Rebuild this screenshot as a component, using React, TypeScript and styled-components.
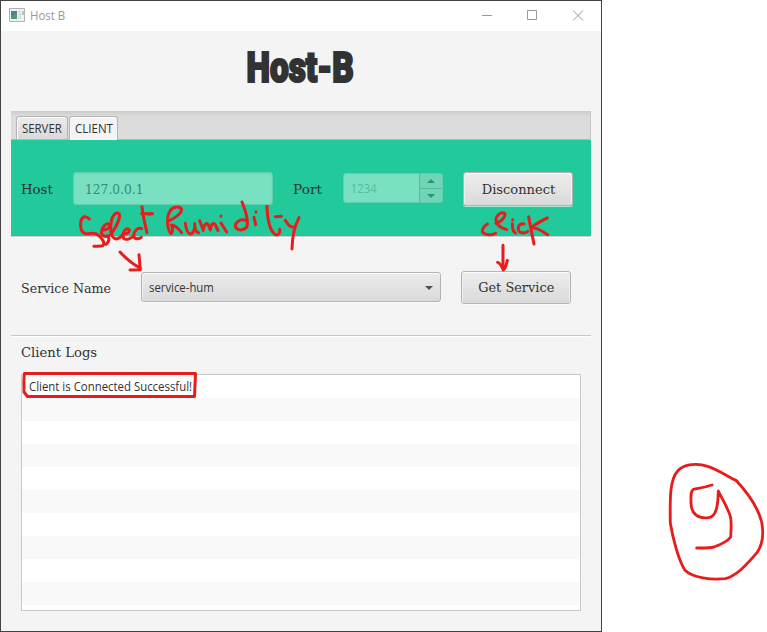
import React from "react";
import styled, { createGlobalStyle } from "styled-components";

const Global = createGlobalStyle`
  * { box-sizing: border-box; }
  body { margin: 0; background: #fff; overflow: hidden; }
`;

const Page = styled.main`
  position: relative;
  width: 767px;
  height: 632px;
  background: #fff;
  color: #323232;
  font: 12px/16px "Open Sans", "Noto Sans", sans-serif;
`;

const Window = styled.section`
  width: 602px;
  height: 632px;
  border: 1px solid #434343;
  background: #f4f4f4;
  display: flex;
  flex-direction: column;
`;

const TitleBar = styled.header`
  flex: 0 0 30px;
  display: flex;
  align-items: center;
  background: #fff;
  color: #999;
  padding: 0 17px 0 8px;

  & > svg:first-child { margin: 0 5px 2px 0; }
`;

const Controls = styled.div`
  display: flex;
  gap: 34px;
  margin-left: auto;
  padding-bottom: 1px;
  svg { display: block; }
`;

/* Inline text whose glyph width can be tuned. */
const Text = styled.span<{ $scale?: number; $spacing?: number; $from?: string }>`
  display: inline-block;
  white-space: nowrap;
  letter-spacing: ${(p) => p.$spacing ?? 0}px;
  transform: scaleX(${(p) => p.$scale ?? 1});
  transform-origin: ${(p) => p.$from ?? "left"} center;
`;

const Heading = styled.h1`
  flex: 0 0 80px;
  margin: 0;
  padding: 0 2px 9px 0;
  display: flex;
  align-items: center;
  justify-content: center;
  font: 900 43px/60px Roboto, "Open Sans", sans-serif;
  -webkit-text-stroke: 2.2px #323232;
`;

const Body = styled.div`
  flex: 1;
  margin: 0 10px;
  display: flex;
  flex-direction: column;
`;

const Tabs = styled.nav`
  height: 29px;
  padding: 5px 5px 0;
  display: flex;
  gap: 1px;
  border: solid #c8c8c8;
  border-width: 0 1px 0 0;
  background: linear-gradient(#cbcbcb 0, #dcdcdc 5px, #dcdcdc 28px, #b6b6b6 28px);
`;

const Tab = styled.div<{ $active?: boolean; $width: number }>`
  width: ${(p) => p.$width}px;
  height: ${(p) => (p.$active ? 24 : 23)}px;
  padding: 4px 0 0 5px;
  border: 1px solid #b5b5b5;
  border-bottom: 0;
  border-radius: 3px 3px 0 0;
  background: ${(p) => (p.$active ? "#f4f4f4" : "linear-gradient(#ececec, #d9d9d9)")};
  box-shadow: inset 1px 1px #fafafa;
`;

const serif = `"DejaVu Serif", "Liberation Serif", serif`;

const Connection = styled.div`
  height: 98px;
  padding: 32px 18px 0 10px;
  display: flex;
  background: #22c99a;
  border-bottom: 1px solid #fff;
  box-shadow: inset 0 -1px #c8cfcc;
`;

const Label = styled.label<{ $width?: number }>`
  width: ${(p) => (p.$width ? p.$width + "px" : "auto")};
  font: 13.3px/20px ${serif};
  padding-top: 8px;
`;

const HostField = styled.div`
  width: 200px;
  height: 33px;
  margin-right: 20px;
  padding: 7px 11px;
  border: 1px solid #5fcfad;
  border-radius: 3px;
  background: #7ae0c2;
  box-shadow: inset 0 1px 2px #6dd5b6;
  color: #2b9273;
  font: 12.5px/19px ${serif};
`;

const Spinner = styled.div`
  width: 100px;
  height: 30px;
  margin: 1px 20px 0 0;
  display: grid;
  grid-template-columns: 1fr 23px;
  border: 1px solid #5fcfad;
  border-radius: 3px;
  background: #7ae0c2;
  color: #55bc9c;
  overflow: hidden;
  & > span { padding: 7px 0 0 7px; }
`;

const Steps = styled.div`
  display: grid;
  grid-template-rows: 1fr 1fr;
  border-left: 1px solid #52bd9b;
`;

const Step = styled.div`
  display: flex;
  align-items: center;
  justify-content: center;
  background: #70d5b7;
  & + & { border-top: 1px solid #52bd9b; }
`;

const Button = styled.button<{ $height: number }>`
  width: 110px;
  height: ${(p) => p.$height}px;
  padding: 1px 0 0;
  border: 1px solid #b4b4b4;
  border-radius: 3px;
  background: linear-gradient(#ededed, #dadada);
  box-shadow: inset 0 1px #fafafa, inset 1px 0 #efefef, inset -1px 0 #efefef, 0 1px rgba(255, 255, 255, 0.6);
  color: #323232;
  font: 13.3px/20px ${serif};
`;

const ServiceRow = styled.div`
  height: 98px;
  padding: 33px 20px 0 10px;
  display: flex;
  border-bottom: 1px solid #c8c8c8;
`;

const Select = styled.div`
  width: 300px;
  height: 30px;
  margin: 1px 20px 0 0;
  padding: 1px 7px 0;
  display: flex;
  align-items: center;
  justify-content: space-between;
  border: 1px solid #b4b4b4;
  border-radius: 3px;
  background: linear-gradient(#ececec, #dadada);
  box-shadow: inset 0 1px #fafafa, inset 1px 0 #efefef, 0 1px rgba(255, 255, 255, 0.6);
`;

const LogsTitle = styled.div`
  height: 38px;
  padding: 6px 10px;
  border-top: 1px solid #fff;
  font: 13.3px/20px ${serif};
`;

const Logs = styled.div`
  height: 237px;
  margin: 0 10px;
  border: 1px solid #c8c8c8;
  background: #fff;
  overflow: hidden;
`;

const LogRow = styled.div`
  height: 23px;
  padding: 4px 7px;
  background: #fff;
  &:nth-child(even) { background: #f9f9f9; }
`;

const Ink = styled.svg`
  position: absolute;
  inset: 0;
  pointer-events: none;
  fill: none;
  stroke: #e81c1c;
  stroke-linecap: round;
  stroke-linejoin: round;
`;

const Arrow = ({ up = false, color }: { up?: boolean; color: string }) => (
  <svg width="8" height="4" viewBox="0 0 8 4">
    <path d={up ? "M0 4L4 0L8 4Z" : "M0 0H8L4 4Z"} fill={color} />
  </svg>
);

const Annotations = () => (
  <Ink width="767" height="632" viewBox="0 0 767 632">
    {/* "Select" and its arrow */}
    <g transform="translate(0 150) scale(.33333)" strokeWidth="9">
      <path d="M268 207C257 196 248 198 243 212C239 231 243 248 258 251C272 253 282 244 295 256C308 266 317 281 308 287C300 290 291 288 282 289" />
      <path d="M307 241C322 239 334 231 328 223C318 216 305 234 304 247C306 262 326 265 338 246C350 227 363 200 357 191C348 184 337 196 334 214C329 238 332 260 345 266C354 270 366 258 370 250M318 283C330 273 329 258 319 259" />
      <path d="M370 252C382 253 392 245 386 237C375 232 365 254 371 265C379 272 394 265 401 257M425 236C413 231 401 243 401 257C403 269 417 268 424 262M426 170C428 195 435 222 441 248M425 191L457 191" />
      <path d="M360 306C374 321 398 343 421 354M417 314L421 359L390 360" />
    </g>
    {/* "humidity" */}
    <g transform="translate(150 150) scale(.33333)" strokeWidth="9">
      <path d="M-5 192L7 191M54 214C69 207 93 194 95 179C91 166 69 170 60 183C49 201 51 237 62 250C68 253 70 232 64 225C74 224 86 237 95 248M106 220C108 235 111 250 121 252C132 252 136 230 134 221M134 221C134 239 139 247 146 248M149 212L160 241M159 239C163 222 171 215 176 226L181 240M181 240C183 220 192 217 196 225L204 242M213 219L230 246M213 198V199" />
      <path d="M287 211C269 205 253 219 257 232C266 244 285 241 291 229C297 205 284 177 276 156M312 202L317 224M318 185V186M351 169C352 201 357 239 375 253C386 259 391 246 389 238M376 200L394 199M406 211C412 222 422 233 431 232M447 203C437 222 427 247 426 297" />
    </g>
    {/* "click" and its arrow */}
    <g transform="translate(450 150) scale(.33333)" strokeWidth="9">
      <path d="M112 222C98 230 94 244 100 249C108 255 127 257 137 250M138 220C153 216 169 199 164 190C153 184 137 198 138 211C139 225 151 233 170 239M187 221C187 235 189 245 196 249M188 209V210M222 222C209 219 202 230 206 242C211 252 229 249 233 244M236 200C240 224 247 257 252 282M292 204C271 213 255 225 243 232C263 233 280 246 293 254" />
      <path d="M159 286V356M143 337C152 340 155 350 160 360C168 355 169 342 172 331" />
    </g>
    {/* Frame around the first log entry */}
    <path d="M24.500 373.500C23.500 380 24 388 24 392L27.500 396.500H194.500L195.500 373.500Z" strokeWidth="3" />
    {/* Circled 9 */}
    <g transform="translate(655 455) scale(.33333)" strokeWidth="8.5">
      <path d="M247 79C211 60 185 42 158 34C128 24 87 26 68 48C43 74 45 139 46 205C53 247 70 314 90 346C113 369 169 375 211 371C249 361 276 326 306 293C324 267 327 238 320 201C308 154 278 113 242 75" />
      <path d="M171 90C151 97 134 99 115 103C106 109 108 124 108 144C109 177 128 192 161 188C186 185 189 145 190 108C203 135 221 163 227 188C230 205 228 229 227 246C217 260 191 271 177 276C160 280 142 279 125 279" />
    </g>
  </Ink>
);

export default function App() {
  return (
    <>
      <Global />
      <Page>
        <Window>
          <TitleBar>
            <svg width="16" height="14" viewBox="0 0 16 14">
              <path d="M.5.5h15v13H.5z" fill="#f2f2f2" stroke="#adb2b6" />
              <path d="M2 3h6v8H2z" fill="#4c8290" />
              <path d="M2 8l6-3v6H2z" fill="#4e9678" />
              <path d="M9 3h3v8H9z" fill="#dcdfe1" />
              <path d="M13 3h2v4h-2z" fill="#a8cbc5" />
            </svg>
            <Text $scale={0.95}>Host B</Text>
            <Controls>
              <svg width="12" height="11" viewBox="0 0 12 11"><path d="M1 5.5h10" stroke="#999" /></svg>
              <svg width="11" height="11" viewBox="0 0 11 11"><path d="M.5.5h9v9h-9z" fill="none" stroke="#999" /></svg>
              <svg width="12" height="11" viewBox="0 0 12 11"><path d="M1 .5l10 10M11 .5l-10 10" stroke="#999" /></svg>
            </Controls>
          </TitleBar>
          <Heading><Text $scale={0.775} $from="center">Host-B</Text></Heading>
          <Body>
            <Tabs>
              <Tab $width={52}><Text $scale={0.95}>SERVER</Text></Tab>
              <Tab $width={49} $active><Text $scale={0.96}>CLIENT</Text></Tab>
            </Tabs>
            <Connection>
              <Label $width={52}><Text>Host</Text></Label>
              <HostField><Text $scale={0.98}>127.0.0.1</Text></HostField>
              <Label $width={50}><Text $scale={1.03}>Port</Text></Label>
              <Spinner>
                <Text $scale={0.95}>1234</Text>
                <Steps>
                  <Step><Arrow up color="#2b9273" /></Step>
                  <Step><Arrow color="#2b9273" /></Step>
                </Steps>
              </Spinner>
              <Button $height={34}><Text $scale={0.98} $from="center">Disconnect</Text></Button>
            </Connection>
            <ServiceRow>
              <Label $width={120}><Text $scale={0.95}>Service Name</Text></Label>
              <Select><Text $scale={0.945}>service-hum</Text><Arrow color="#505050" /></Select>
              <Button $height={33}><Text $scale={0.97} $from="center">Get Service</Text></Button>
            </ServiceRow>
            <LogsTitle><Text $scale={0.99}>Client Logs</Text></LogsTitle>
            <Logs>
              {Array.from({ length: 11 }, (_, i) => (
                <LogRow key={i}>{i === 0 && <Text $scale={0.95}>Client is Connected Successful!</Text>}</LogRow>
              ))}
            </Logs>
          </Body>
        </Window>
        <Annotations />
      </Page>
    </>
  );
}
